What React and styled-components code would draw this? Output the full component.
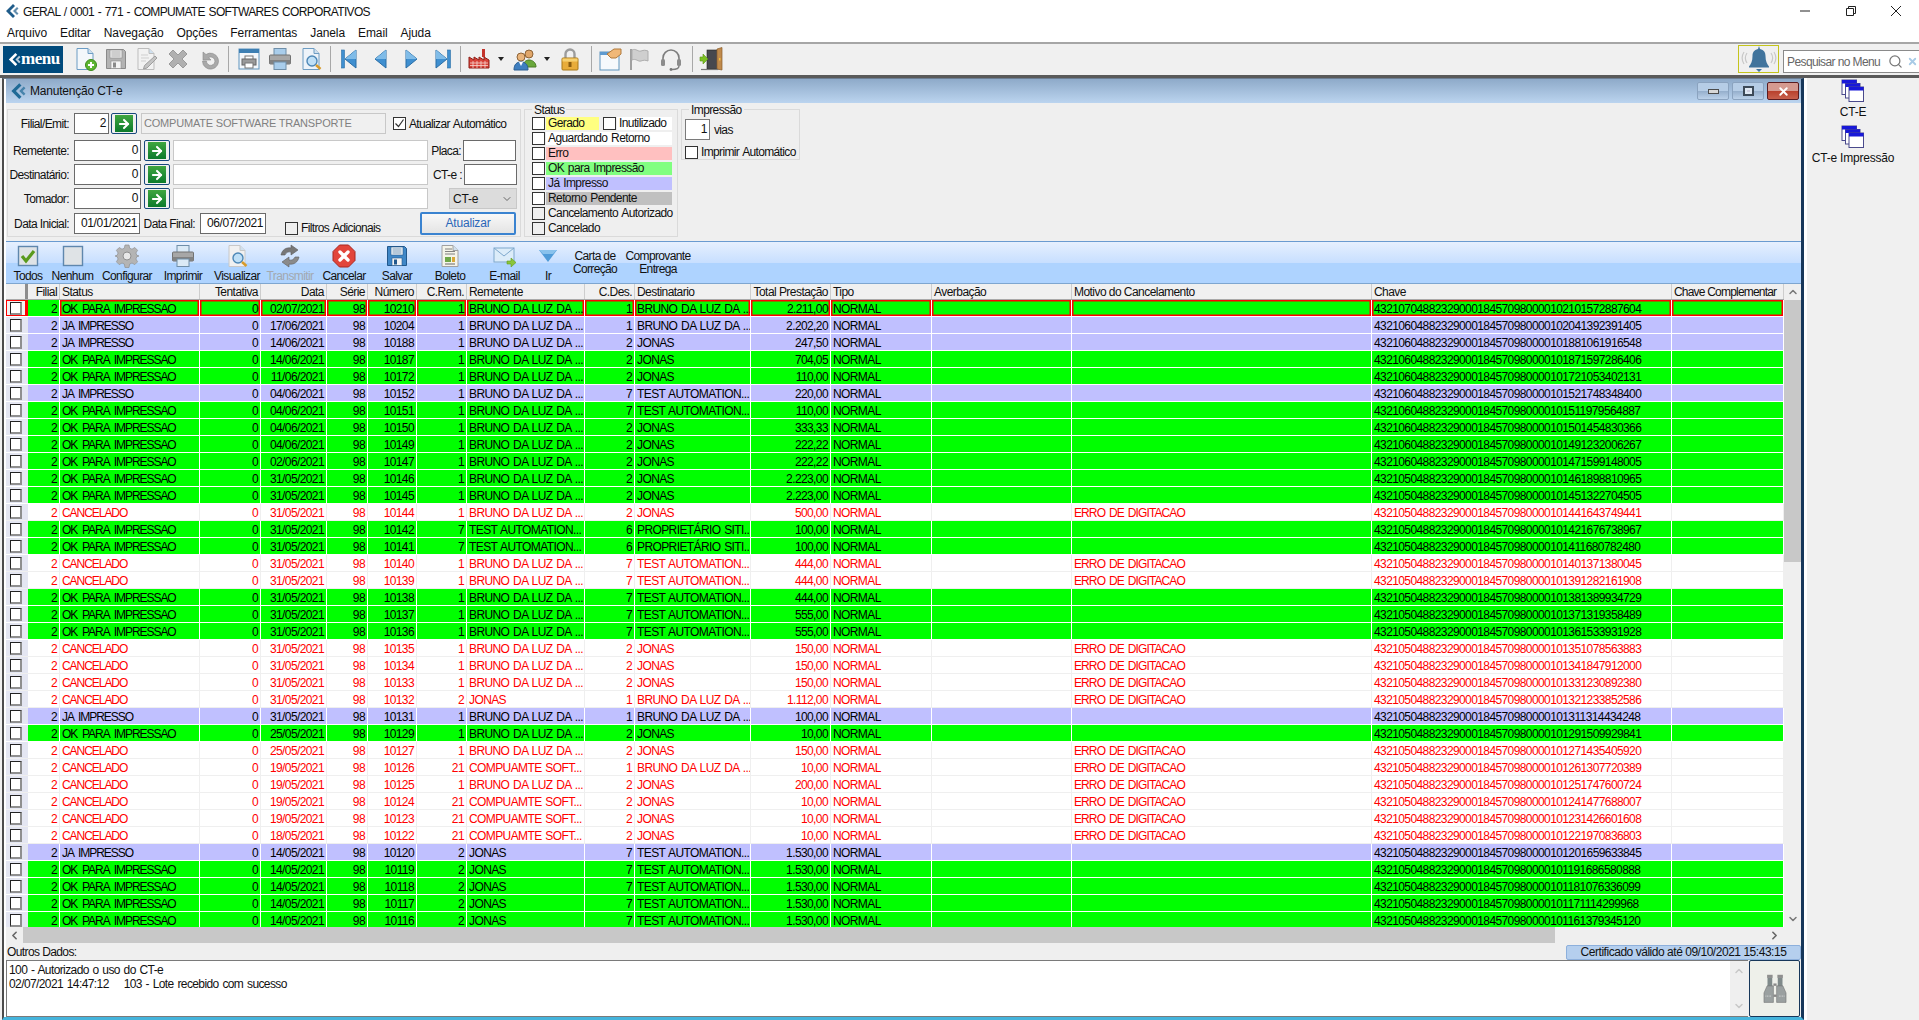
import React from 'react'
import styled, { createGlobalStyle } from 'styled-components'
import { ArrowRight, ChevronDown, ChevronUp, ChevronLeft, ChevronRight, Search, X } from 'lucide-react'

const GlobalStyle = createGlobalStyle`
  html, body {
    margin: 0;
    padding: 0;
    overflow: hidden;
    background: #f0f0f0;
  }
  * { box-sizing: border-box; }
  body {
    font-family: "Liberation Sans", Arial, sans-serif;
    font-size: 12px;
    color: #111;
  }
`

const COLUMNS = [
  { key: 'filial', title: 'Filial', width: 32, right: true },
  { key: 'status', title: 'Status', width: 140, spacing: -1.05, words: 2.5 },
  { key: 'tentativa', title: 'Tentativa', width: 61, right: true },
  { key: 'data', title: 'Data', width: 66, right: true },
  { key: 'serie', title: 'Série', width: 41, right: true },
  { key: 'numero', title: 'Número', width: 49, right: true },
  { key: 'crem', title: 'C.Rem.', width: 50, right: true },
  { key: 'rem', title: 'Remetente', width: 118, words: 1 },
  { key: 'cdes', title: 'C.Des.', width: 50, right: true },
  { key: 'dest', title: 'Destinatario', width: 116, words: 1 },
  { key: 'total', title: 'Total Prestação', width: 80, right: true },
  { key: 'tipo', title: 'Tipo', width: 101 },
  { key: 'averb', title: 'Averbação', width: 140 },
  { key: 'motivo', title: 'Motivo do Cancelamento', width: 300, spacing: -0.9, words: 1.5 },
  { key: 'chave', title: 'Chave', width: 300 },
  { key: 'comp', title: 'Chave Complementar', width: 112, headSpacing: -0.8 }
]

const GRID_TEMPLATE = `22px ${COLUMNS.map(c => `${c.width}px`).join(' ')}`

const PARTIES = {
  B: { code: 1, name: 'BRUNO DA LUZ DA ...' },
  J: { code: 2, name: 'JONAS' },
  T: { code: 7, name: 'TEST AUTOMATION...' },
  C: { code: 21, name: 'COMPUAMTE SOFT...' },
  P: { code: 6, name: 'PROPRIETÁRIO SITI...' }
}

const STATUS = {
  ok: 'OK PARA IMPRESSAO',
  ja: 'JA IMPRESSO',
  ca: 'CANCELADO'
}

// status, data, numero, remetente, destinatario, total, fim da chave
const RAW_ROWS = [
  ['ok', '02/07/2021', '10210', 'B', 'B', '2.211,00', '1572887604'],
  ['ja', '17/06/2021', '10204', 'B', 'B', '2.202,20', '1392391405'],
  ['ja', '14/06/2021', '10188', 'B', 'J', '247,50', '1061916548'],
  ['ok', '14/06/2021', '10187', 'B', 'J', '704,05', '1597286406'],
  ['ok', '11/06/2021', '10172', 'B', 'J', '110,00', '1053402131'],
  ['ja', '04/06/2021', '10152', 'B', 'T', '220,00', '1748348400'],
  ['ok', '04/06/2021', '10151', 'B', 'T', '110,00', '1979564887'],
  ['ok', '04/06/2021', '10150', 'B', 'J', '333,33', '1454830366'],
  ['ok', '04/06/2021', '10149', 'B', 'J', '222,22', '1232006267'],
  ['ok', '02/06/2021', '10147', 'B', 'J', '222,22', '1599148005'],
  ['ok', '31/05/2021', '10146', 'B', 'J', '2.223,00', '1898810965'],
  ['ok', '31/05/2021', '10145', 'B', 'J', '2.223,00', '1322704505'],
  ['ca', '31/05/2021', '10144', 'B', 'J', '500,00', '1643749441'],
  ['ok', '31/05/2021', '10142', 'T', 'P', '100,00', '1676738967'],
  ['ok', '31/05/2021', '10141', 'T', 'P', '100,00', '1680782480'],
  ['ca', '31/05/2021', '10140', 'B', 'T', '444,00', '1371380045'],
  ['ca', '31/05/2021', '10139', 'B', 'T', '444,00', '1282161908'],
  ['ok', '31/05/2021', '10138', 'B', 'T', '444,00', '1389934729'],
  ['ok', '31/05/2021', '10137', 'B', 'T', '555,00', '1319358489'],
  ['ok', '31/05/2021', '10136', 'B', 'T', '555,00', '1533931928'],
  ['ca', '31/05/2021', '10135', 'B', 'J', '150,00', '1078563883'],
  ['ca', '31/05/2021', '10134', 'B', 'J', '150,00', '1847912000'],
  ['ca', '31/05/2021', '10133', 'B', 'J', '150,00', '1230892380'],
  ['ca', '31/05/2021', '10132', 'J', 'B', '1.112,00', '1233852586'],
  ['ja', '31/05/2021', '10131', 'B', 'B', '100,00', '1314434248'],
  ['ok', '25/05/2021', '10129', 'B', 'J', '10,00', '1509929841'],
  ['ca', '25/05/2021', '10127', 'B', 'J', '150,00', '1435405920'],
  ['ca', '19/05/2021', '10126', 'C', 'B', '10,00', '1307720389'],
  ['ca', '19/05/2021', '10125', 'B', 'J', '200,00', '1747600724'],
  ['ca', '19/05/2021', '10124', 'C', 'J', '10,00', '1477688007'],
  ['ca', '19/05/2021', '10123', 'C', 'J', '10,00', '1426601608'],
  ['ca', '18/05/2021', '10122', 'C', 'J', '10,00', '1970836803'],
  ['ja', '14/05/2021', '10120', 'J', 'T', '1.530,00', '1659633845'],
  ['ok', '14/05/2021', '10119', 'J', 'T', '1.530,00', '1686580888'],
  ['ok', '14/05/2021', '10118', 'J', 'T', '1.530,00', '1076336099'],
  ['ok', '14/05/2021', '10117', 'J', 'T', '1.530,00', '1114299968'],
  ['ok', '14/05/2021', '10116', 'J', 'T', '1.530,00', '1379345120']
]

const ROWS = RAW_ROWS.map(([kind, data, numero, rem, dest, total, tail]) => ({
  kind,
  filial: '2',
  status: STATUS[kind],
  tentativa: '0',
  data,
  serie: '98',
  numero,
  crem: PARTIES[rem].code,
  rem: PARTIES[rem].name,
  cdes: PARTIES[dest].code,
  dest: PARTIES[dest].name,
  total,
  tipo: 'NORMAL',
  averb: '',
  motivo: kind === 'ca' ? 'ERRO DE DIGITACAO' : '',
  chave: `4321${data.slice(3, 5)}04882329000184570980000${numero}${tail}`,
  comp: ''
}))

const ROW_COLORS = {
  ok: { bg: '#00ff00', fg: '#000', line: '#ffffff' },
  ja: { bg: '#c0c0ff', fg: '#000', line: '#ffffff' },
  ca: { bg: '#ffffff', fg: '#ff0000', line: '#efefef' }
}

/* ---------- estrutura geral ---------- */

const Page = styled.div`
  width: 1919px;
  height: 1020px;
  display: flex;
  flex-direction: column;
  overflow: hidden;
`

const TitleBar = styled.div`
  height: 21px;
  background: #fff;
  display: flex;
  align-items: center;
  padding-left: 3px;
`

const TitleText = styled.span`
  margin-left: 4px;
  padding-top: 2px;
  letter-spacing: -0.65px;
  word-spacing: 1px;
  white-space: nowrap;
`

const WindowControls = styled.div`
  margin-left: auto;
  display: flex;
  height: 21px;
`

const WindowControl = styled.div`
  width: 45.5px;
  display: flex;
  align-items: center;
  justify-content: center;
`

const MenuBar = styled.div`
  height: 21px;
  background: #fff;
  display: flex;
  align-items: center;
  gap: 13px;
  padding: 2px 0 0 7px;
`

const MenuItem = styled.span`
  letter-spacing: -0.1px;
`

const MainToolbar = styled.div`
  height: 36px;
  flex: none;
  display: flex;
  align-items: center;
  background: #f0f0f0;
  border-top: 2px solid #a6a6a6;
  border-bottom: 3px solid #5a5a5a;
  padding: 0 0 1px 3px;
`

const MenuLogo = styled.div`
  width: 60px;
  height: 27px;
  flex: none;
  background: #004a7c;
  color: #fff;
  display: flex;
  align-items: center;
  padding-left: 3px;
  margin-right: 6px;
  font-family: "Liberation Serif", serif;
  font-weight: bold;
  font-size: 17px;
  letter-spacing: -0.5px;
`

const ToolIcon = styled.div`
  width: ${p => p.$w || 31}px;
  height: 28px;
  flex: none;
  display: flex;
  align-items: center;
  justify-content: center;
`

const ToolSep = styled.div`
  width: 1px;
  height: 26px;
  flex: none;
  margin: 0 ${p => p.$gap || 4}px;
  background: #a8a8a8;
`

const RightTools = styled.div`
  margin-left: auto;
  display: flex;
  align-items: flex-end;
  gap: 4px;
  height: 28px;
`

const BellBox = styled.div`
  width: 41px;
  height: 28px;
  border: 1px solid #c4c41c;
  display: flex;
  align-items: center;
  justify-content: center;
`

const MenuSearch = styled.div`
  width: 136px;
  height: 23px;
  border: 1px solid #8a8a8a;
  border-right: none;
  background: #fff;
  display: flex;
  align-items: center;
  padding-left: 3px;
  color: #666;
  letter-spacing: -0.6px;
  white-space: nowrap;
`

const SearchHint = styled.span`
  width: 101px;
`

const SearchGlyph = styled.span`
  display: flex;
  margin-left: ${p => p.$ml || 0}px;
  color: ${p => p.$color};
`

const Body = styled.div`
  flex: 1;
  min-height: 0;
  display: flex;
  padding-left: 2px;
`

const ChildWindow = styled.div`
  width: 1802px;
  flex: none;
  display: flex;
  flex-direction: column;
  background: #fff;
  border-left: 2px solid #4c4c4c;
  border-right: 3px solid #17375a;
  border-bottom: 3px solid #45b4dc;
  border-top: 1px solid #6d7f94;
  padding-left: 2px;
`

const SidePanel = styled.div`
  flex: 1;
  border-left: 3px solid #fff;
  background: #f0f0f0;
  display: flex;
  flex-direction: column;
  align-items: center;
  padding-top: 1px;
  padding-right: 20px;
`

const SideItem = styled.div`
  height: 46px;
  display: flex;
  flex-direction: column;
  align-items: center;
  gap: 2px;
  letter-spacing: -0.2px;
  white-space: nowrap;
`

const ChildTitle = styled.div`
  height: 24px;
  flex: none;
  background: linear-gradient(#8eaac9, #bbd4ef);
  display: flex;
  align-items: center;
  padding-left: 2px;
`

const ChildTitleText = styled.span`
  margin-left: 4px;
  letter-spacing: -0.2px;
`

const ChildControls = styled.div`
  margin-left: auto;
  display: flex;
  gap: 3px;
  padding-right: 2px;
`

const ChildControl = styled.div`
  width: 32px;
  height: 18px;
  border-radius: 2px;
  display: flex;
  align-items: center;
  justify-content: center;
  border: 1px solid ${p => (p.$close ? '#5a1c20' : '#8ba3bf')};
  background: ${p => (p.$close
    ? 'linear-gradient(#d59a90 0 50%, #b8402c 50%, #c8604c)'
    : 'linear-gradient(#b6cde6 0 50%, #94aecb 50%, #bcd2ea)')};
  color: #fff;
`

const MinGlyph = styled.span`
  width: 11px;
  height: 5px;
  background: #d8d8d8;
  border: 1px solid #4c4c4c;
`

const MaxGlyph = styled.span`
  width: 11px;
  height: 10px;
  border: 2px solid #3d4a58;
  background: #ccd;
  box-shadow: inset 0 0 0 2px #dfe8f2;
`

/* ---------- filtros ---------- */

const FormArea = styled.div`
  height: 138px;
  flex: none;
  background: #efefef;
  display: flex;
  align-items: flex-start;
  gap: 3px;
  padding: 6px 0 0 1px;
`

const GroupBox = styled.div`
  position: relative;
  flex: none;
  width: ${p => p.$w}px;
  height: ${p => p.$h}px;
  border: 1px solid #dadada;
`

const GroupTitle = styled.span`
  position: absolute;
  top: -6px;
  left: 7px;
  padding: 0 2px;
  background: #efefef;
  line-height: 12px;
  letter-spacing: -0.6px;
`

const FilterRows = styled.div`
  display: flex;
  flex-direction: column;
  padding-top: 3px;
  gap: 3px;
`

const FilterRow = styled.div`
  display: flex;
  align-items: center;
  height: ${p => p.$h || 21}px;
  margin-bottom: ${p => p.$mb || 0}px;
`

const FieldLabel = styled.label`
  width: ${p => p.$w || 61}px;
  margin-left: ${p => p.$ml || 0}px;
  flex: none;
  text-align: right;
  letter-spacing: -0.6px;
  white-space: nowrap;
`

const Field = styled.div`
  width: ${p => p.$w}px;
  height: 21px;
  flex: none;
  margin-left: ${p => p.$ml || 0}px;
  background: #fff;
  border: 1px solid ${p => (p.$dark ? '#6a6a6a' : '#c8c8c8')};
  text-align: ${p => (p.$left ? 'left' : 'right')};
  padding: 0 2px;
  line-height: 18px;
  letter-spacing: -0.4px;
  white-space: nowrap;
  overflow: hidden;
`

const ReadOnlyField = styled(Field)`
  background: #f0f0f0;
  color: #808080;
  text-align: left;
  font-size: 11px;
  letter-spacing: -0.2px;
`

const ArrowButton = styled.div`
  width: 26px;
  height: 21px;
  flex: none;
  margin-left: ${p => p.$ml || 0}px;
  border: 1px solid #17487c;
  border-radius: 2px;
  background: #f0f0f0;
  display: flex;
  align-items: center;
  justify-content: center;
`

const ArrowFace = styled.span`
  width: 18px;
  height: 17px;
  background: linear-gradient(#3fa63f, #0c7a2c);
  display: flex;
  align-items: center;
  justify-content: center;
  color: #fff;
`

const Check = styled.span`
  width: 13px;
  height: 13px;
  flex: none;
  margin-left: ${p => p.$ml || 0}px;
  border: 1px solid #333;
  background: ${p => (p.$bare ? 'transparent' : '#fff')};
  display: inline-flex;
  align-items: center;
  justify-content: center;
`

const CheckLabel = styled.span`
  margin-left: ${p => p.$ml ?? 3}px;
  letter-spacing: -0.65px;
  word-spacing: 1px;
  white-space: nowrap;
`

const FiltrosCheck = styled.div`
  display: flex;
  align-items: center;
  align-self: flex-end;
  margin-left: 19px;
`

const Combo = styled.div`
  width: 68px;
  height: 21px;
  flex: none;
  margin-left: 21px;
  background: #dcdcdc;
  border: 1px solid #c8c8c8;
  display: flex;
  align-items: center;
  justify-content: space-between;
  padding: 0 3px;
  letter-spacing: -0.2px;
`

const RefreshButton = styled.div`
  width: 96px;
  height: 23px;
  flex: none;
  margin-left: auto;
  margin-right: 4px;
  border: 2px solid #3a83d0;
  border-radius: 2px;
  background: linear-gradient(#f8f8f8, #e4e4e4);
  color: #2a66b8;
  text-align: center;
  line-height: 19px;
  letter-spacing: -0.2px;
`

const StatusRows = styled.div`
  display: flex;
  flex-direction: column;
  padding: 6px 5px 0 7px;
`

const StatusRow = styled.div`
  height: 15px;
  display: flex;
  align-items: center;
`

const StatusTag = styled.span`
  flex: ${p => (p.$w ? 'none' : 1)};
  width: ${p => (p.$w ? `${p.$w}px` : 'auto')};
  height: 13px;
  margin-left: ${p => p.$ml || 1}px;
  padding-left: 2px;
  background: ${p => p.$bg || 'transparent'};
  line-height: 13px;
  letter-spacing: -0.6px;
  word-spacing: 1px;
  white-space: nowrap;
`

const PrintRows = styled.div`
  padding: 9px 0 0 3px;
  display: flex;
  flex-direction: column;
  gap: 5px;
`

const PrintRow = styled.div`
  display: flex;
  align-items: center;
`

const ViasField = styled(Field)`
  border-color: #7a7a7a;
`

/* ---------- barra de ações ---------- */

const ActionBar = styled.div`
  height: 43px;
  flex: none;
  display: flex;
  border-top: 1px solid #6a9bd0;
  border-bottom: 1px solid #7ea6d0;
  background: linear-gradient(#e6f0fe 0, #c8dfff 50%, #aed3ff 50%, #aed3ff 100%);
`

const ActionButton = styled.div`
  width: ${p => p.$w}px;
  flex: none;
  display: flex;
  flex-direction: column;
  align-items: center;
  justify-content: flex-end;
  color: ${p => (p.$disabled ? '#a2a8b0' : '#111')};
  letter-spacing: -0.6px;
  white-space: nowrap;
`

const ActionIcon = styled.div`
  height: 24px;
  display: flex;
  align-items: center;
  justify-content: center;
  margin-bottom: 1px;
`

const ActionText = styled.div`
  width: ${p => p.$w}px;
  flex: none;
  align-self: center;
  text-align: center;
  line-height: 13px;
  letter-spacing: -0.65px;
`

/* ---------- grade ---------- */

const GridArea = styled.div`
  flex: none;
  display: flex;
  height: 643px;
  background: #fff;
`

const GridColumn = styled.div`
  width: 1778px;
  flex: none;
  overflow: hidden;
`

const HeaderRow = styled.div`
  display: grid;
  grid-template-columns: ${GRID_TEMPLATE};
  height: 16px;
  background: #f0f0f0;
  border-bottom: 1px solid #a9a9a9;
`

const HeaderCell = styled.div`
  text-align: ${p => (p.$right ? 'right' : 'left')};
  padding: 1px 2px 0;
  border-right: 1px solid #cdcdcd;
  line-height: 15px;
  letter-spacing: ${p => p.$spacing || -0.55}px;
  overflow: hidden;
  white-space: nowrap;
`

const HeaderCorner = styled.div`
  border-right: 3px solid #8d8d8d;
`

const DataRow = styled.div`
  display: grid;
  grid-template-columns: ${GRID_TEMPLATE};
  height: 17px;
  background: ${p => ROW_COLORS[p.$kind].bg};
  color: ${p => ROW_COLORS[p.$kind].fg};
  border-bottom: 1px solid ${p => ROW_COLORS[p.$kind].line};
`

const DataCell = styled.div`
  text-align: ${p => (p.$right ? 'right' : 'left')};
  padding: 2px ${p => (p.$right ? 2 : 1)}px 0 2px;
  border-right: 1px solid ${p => ROW_COLORS[p.$kind].line};
  line-height: 14px;
  letter-spacing: ${p => p.$spacing || -0.6}px;
  word-spacing: ${p => p.$words || 0}px;
  overflow: hidden;
  white-space: nowrap;
  ${p => p.$selected && `
    box-shadow: inset 0 0 0 1.5px #ff0000;
  `}
`

const RowIndicator = styled.div`
  background: #e4e6f2;
  display: flex;
  align-items: center;
  padding-left: 4px;
  ${p => p.$selected && `
    background: #f2f2f2;
    border: 1px solid #ff0000;
    border-right: 3px solid #ff0000;
    padding-left: 3px;
  `}
`

const RowCheck = styled.span`
  width: 12px;
  height: 13px;
  background: #fff;
  border-top: 1px solid #222;
  border-left: 1px solid #222;
  border-right: 2px solid #8f8f8f;
  border-bottom: 2px solid #8f8f8f;
`

const VScroll = styled.div`
  width: 17px;
  flex: none;
  background: #efefef;
  display: flex;
  flex-direction: column;
  align-items: center;
  color: #777;
`

const VArrow = styled.div`
  height: 16px;
  flex: none;
  display: flex;
  align-items: center;
  justify-content: center;
`

const VThumb = styled.div`
  width: 100%;
  height: 262px;
  flex: none;
  background: #c8c8c8;
`

const VTrack = styled.div`
  flex: 1;
`

const HScroll = styled.div`
  height: 16px;
  flex: none;
  display: flex;
  align-items: center;
  background: #efefef;
  color: #666;
`

const HArrow = styled.div`
  width: ${p => p.$w || 17}px;
  display: flex;
  justify-content: center;
  flex: none;
  margin-left: ${p => p.$ml || 0}px;
`

const HThumb = styled.div`
  width: 1532px;
  height: 16px;
  flex: none;
  background: #c8c8c8;
`

/* ---------- rodapé ---------- */

const InfoRow = styled.div`
  height: 17px;
  flex: none;
  display: flex;
  align-items: flex-end;
  background: #efefef;
  padding-left: 1px;
  letter-spacing: -0.6px;
`

const InfoLabel = styled.span`
  line-height: 15px;
`

const CertBadge = styled.div`
  margin-left: auto;
  width: 235px;
  height: 15px;
  background: #b5cfee;
  border: 1px solid #8db0dc;
  border-radius: 2px;
  text-align: center;
  line-height: 13px;
  letter-spacing: -0.47px;
`

const MemoRow = styled.div`
  flex: 1;
  min-height: 0;
  display: flex;
  background: #efefef;
`

const Memo = styled.div`
  flex: 1;
  display: flex;
  background: #fff;
  border: 1px solid #7a7a7a;
  border-right: none;
`

const MemoText = styled.div`
  flex: 1;
  padding: 3px 2px;
  line-height: 13.5px;
  letter-spacing: -0.6px;
  word-spacing: 1px;
  white-space: pre;
`

const MemoScroll = styled.div`
  width: 18px;
  background: #efefef;
  color: #c8c8c8;
  display: flex;
  flex-direction: column;
  align-items: center;
  justify-content: space-between;
  padding: 4px 0;
`

const SearchButton = styled.div`
  width: 51px;
  flex: none;
  margin: 0 1px 0 1px;
  border: 1px solid #17375a;
  border-radius: 2px;
  background: #eef0ea;
  display: flex;
  align-items: center;
  justify-content: center;
`

/* ---------- ícones ---------- */

const Svg = ({ w = 24, h = 24, box = '0 0 24 24', children }) => (
  <svg width={w} height={h} viewBox={box}>{children}</svg>
)

const BrandChevrons = ({ color = '#2a6f9e', size = 16 }) => (
  <Svg w={size} h={size} box='0 0 16 16'>
    <path d='M10 1 L3 8 L10 15 L12 13 L7 8 L12 3 Z' fill={color} />
    <path d='M14 4 L10 8 L14 12 L15.5 10.5 L13 8 L15.5 5.5 Z' fill={color} opacity='.7' />
  </Svg>
)

const Page2 = ({ fill = '#f3f7fb', stroke = '#6c9cc4', children }) => (
  <Svg>
    <path d='M4 1.5h11l5 5v16H4z' fill={fill} stroke={stroke} />
    <path d='M15 1.5v5h5' fill='#cfe0ef' stroke={stroke} />
    {children}
  </Svg>
)

const NewDocIcon = () => (
  <Page2>
    <circle cx='18' cy='18' r='5.5' fill='#5cb531' stroke='#3c8a1c' />
    <path d='M18 15v6M15 18h6' stroke='#fff' strokeWidth='2' />
  </Page2>
)

const FloppyIcon = ({ body = '#b3b3b3', label = '#ececec', dark = '#8a8a8a' }) => (
  <Svg>
    <path d='M2.5 2.5h17l2 2v17h-19z' fill={body} stroke={dark} />
    <rect x='6' y='3' width='12' height='8' fill={label} stroke={dark} strokeWidth='.6' />
    <path d='M7.5 5h9M7.5 7h9M7.5 9h9' stroke={dark} strokeWidth='.6' />
    <rect x='7' y='14' width='10' height='7.5' fill='#f4f4f4' stroke={dark} strokeWidth='.6' />
    <rect x='9' y='15.5' width='3' height='5' fill={dark} />
  </Svg>
)

const EditDocIcon = () => (
  <Page2 fill='#f2f2f2' stroke='#bdbdbd'>
    <path d='M21 9l2 2-10 10-3.5 1 1-3.5z' fill='#c4c4c4' stroke='#9e9e9e' />
    <path d='M7 8h7M7 11h8M7 14h5' stroke='#cfcfcf' />
  </Page2>
)

const GrayXIcon = () => (
  <Svg>
    <path d='M3 7l4-4 5 5 5-5 4 4-5 5 5 5-4 4-5-5-5 5-4-4 5-5z' fill='#b0b0b0' stroke='#9a9a9a' />
  </Svg>
)

const UndoIcon = () => (
  <Svg>
    <path d='M8 6.5a8 8 0 1 1-3.5 6.5h4a4.2 4.2 0 1 0 2-3.4L13 12H5V4z' fill='#a9a9a9' stroke='#8c8c8c' strokeWidth='.6' transform='translate(1 1)' />
  </Svg>
)

const PrintWindowIcon = () => (
  <Svg>
    <rect x='2' y='2' width='20' height='20' fill='#f3f7fb' stroke='#5f94bd' />
    <rect x='2' y='2' width='20' height='4' fill='#3d7fb3' />
    <rect x='8' y='9' width='8' height='4' fill='#fff' stroke='#777' />
    <rect x='5' y='12' width='14' height='6' fill='#9a9a9a' stroke='#666' />
    <rect x='8' y='16' width='8' height='5' fill='#fff' stroke='#777' />
  </Svg>
)

const PrinterIcon = ({ tint = '#a9cdeb' }) => (
  <Svg>
    <rect x='6' y='1.5' width='12' height='7' fill={tint} stroke='#6f8ea8' />
    <rect x='1.5' y='8' width='21' height='9' rx='1' fill='#a7a7a7' stroke='#727272' />
    <rect x='1.5' y='13' width='21' height='4' fill='#828282' />
    <rect x='6' y='15' width='12' height='7.5' fill={tint} stroke='#6f8ea8' />
  </Svg>
)

const PageZoomIcon = ({ fill = '#edf3f9', stroke = '#6d9cc2' }) => (
  <Page2 fill={fill} stroke={stroke}>
    <circle cx='13' cy='14' r='5' fill='#bfe0f7' stroke='#4d87b6' strokeWidth='1.4' />
    <path d='M17 18l4.5 4' stroke='#d79a2a' strokeWidth='2.4' />
  </Page2>
)

const NavIcon = ({ dir, bar }) => (
  <Svg>
    <g transform={dir === 'left' ? 'translate(24 0) scale(-1 1)' : undefined}>
      <path d='M7 3l11 9-11 9z' fill='#3f8fd0' stroke='#2a6ea6' />
      <path d='M7 3l11 9H7z' fill='#80bce8' />
      {bar && <rect x='18.5' y='3' width='3' height='18' fill='#3f8fd0' stroke='#2a6ea6' strokeWidth='.6' />}
    </g>
  </Svg>
)

const Caret = styled.span`
  width: 0;
  height: 0;
  border-left: 3px solid transparent;
  border-right: 3px solid transparent;
  border-top: 4px solid #222;
`

const FactoryIcon = () => (
  <Svg>
    <rect x='15' y='2' width='3' height='8' fill='#c4342c' />
    <path d='M2 10l5 3v-3l5 3v-3l5 3v-3l5 3v8H2z' fill='#d8433a' stroke='#8e2018' />
    <path d='M3 16h18M3 18.5h18M6 14v7M10 14v7M14 14v7M18 14v7' stroke='#f6d8d0' strokeWidth='.8' />
  </Svg>
)

const UsersIcon = () => (
  <Svg>
    <circle cx='16' cy='7' r='4' fill='#e0a66a' stroke='#8c6236' />
    <path d='M10 20c0-5 3-7 6-7s7 2 7 7z' fill='#6aa83c' stroke='#4a7d26' />
    <circle cx='8' cy='10' r='4' fill='#eab57c' stroke='#8c6236' />
    <path d='M1 23c0-6 3-8 7-8s7 2 7 8z' fill='#3f7fc0' stroke='#2a5f94' />
    <path d='M6 15l2 4 2-4' fill='#fff' />
  </Svg>
)

const LockIcon = () => (
  <Svg>
    <path d='M7.5 11V7a4.5 4.5 0 0 1 9 0v4' fill='none' stroke='#9c9c9c' strokeWidth='2.4' />
    <rect x='4' y='11' width='16' height='12' rx='1' fill='#e8ac3a' stroke='#a87818' />
    <rect x='4.5' y='11.5' width='15' height='3' fill='#f6d070' />
    <rect x='10.5' y='15' width='3' height='5' fill='#8a5c10' />
  </Svg>
)

const NoteHandIcon = () => (
  <Svg>
    <rect x='2' y='5' width='19' height='18' fill='#f6f9fc' stroke='#5f94bd' />
    <rect x='2' y='5' width='19' height='3' fill='#5f9bd0' />
    <path d='M9 7l7-5 7 0 0 5-5 4-5 0z' fill='#f0b878' stroke='#b07a3c' />
  </Svg>
)

const FlagIcon = () => (
  <Svg>
    <path d='M4 2v21' stroke='#a0a0a0' strokeWidth='2' />
    <path d='M5 3c4-2 6 2 9 1s4-1 7 0v10c-3-1-4-1-7 0s-5-3-9-1z' fill='#cfcfcf' stroke='#adadad' />
  </Svg>
)

const HeadsetIcon = () => (
  <Svg>
    <path d='M4 14V11a8 8 0 0 1 16 0v3' fill='none' stroke='#7d7d7d' strokeWidth='1.6' />
    <rect x='2' y='12' width='4' height='7' rx='1.5' fill='#8c8c8c' />
    <rect x='18' y='12' width='4' height='7' rx='1.5' fill='#8c8c8c' />
    <path d='M20 19c0 3-3 3.5-7 3.5' fill='none' stroke='#7d7d7d' strokeWidth='1.4' />
    <circle cx='12' cy='22.5' r='1.4' fill='#777' />
  </Svg>
)

const DoorIcon = () => (
  <Svg>
    <rect x='8' y='3' width='12' height='19' fill='#47484e' stroke='#222' strokeWidth='.6' />
    <path d='M18 2l5-1.5V23l-5-1z' fill='#c08a4c' stroke='#8a5c28' strokeWidth='.7' />
    <rect x='20' y='11' width='1.5' height='2.5' fill='#f2c040' />
    <path d='M1 10h3V7l5 5-5 5v-3H1z' fill='#7cc024' stroke='#5a9414' strokeWidth='.6' />
    <path d='M2 22.5h17' stroke='#777' strokeWidth='1.2' />
  </Svg>
)

const BellIcon = () => (
  <Svg w={38} h={26} box='0 0 38 26'>
    <path d='M7 7c-2 3-2 7 0 10M4 6c-2.500 4-2.500 8 0 12M31 7c2 3 2 7 0 10M34 6c2.500 4 2.500 8 0 12' fill='none' stroke='#c8c8c8' strokeWidth='1.2' />
    <path d='M19 0l1 3c4 .8 5.500 3.500 5.500 7 0 5 1.500 8 3.500 10.500v1H9v-1c2-2.500 3.500-5.500 3.500-10.500 0-3.500 1.500-6.200 5.500-7z' fill='#41749c' />
    <path d='M16 23h6l-3 3z' fill='#41749c' />
  </Svg>
)

const WindowsIcon = () => (
  <Svg w={24} h={24}>
    {[[1, 1], [4.500, 4.500], [8, 8]].map(([x, y]) => (
      <g key={x}>
        <rect x={x} y={y} width='14.500' height='14.500' fill='#fff' stroke='#4a4a8c' />
        <rect x={x} y={y} width='14.500' height='3.500' fill='#1818d8' />
      </g>
    ))}
  </Svg>
)

const CheckedBoxIcon = ({ checked }) => (
  <Svg>
    <rect x='2.500' y='2.500' width='19' height='19' fill='#dfe3e6' stroke='#5f87ad' strokeWidth='1.400' />
    {checked && <path d='M6 12l4 5 8-10' fill='none' stroke='#5a9a1c' strokeWidth='3.200' />}
  </Svg>
)

const GearIcon = () => (
  <Svg>
    <path d='M10 1h4l.7 3.200 2.300 1 2.800-1.700 2.800 2.800L20.900 9l1 2.300L24 12v0l-2.100.7-1 2.300 1.700 2.800-2.800 2.800L17 19l-2.300 1-.7 3.500h-4L9.300 20 7 19l-2.800 1.600-2.800-2.800L3.100 15l-1-2.300L0 12l2.100-.7 1-2.300L1.400 6.300l2.800-2.800L7 5.200l2.300-1z' fill='#b4b4b4' stroke='#8f8f8f' strokeWidth='.7' />
    <circle cx='12' cy='12' r='4' fill='#e8e8e8' stroke='#8f8f8f' />
  </Svg>
)

const SyncIcon = () => (
  <Svg>
    <path d='M3 11c1-5 5-8 10-7V1l7 5-7 5V8c-3-.6-5 .6-6 3z' fill='#777' stroke='#5c5c5c' strokeWidth='.6' />
    <path d='M21 13c-1 5-5 8-10 7v3l-7-5 7-5v3c3 .6 5-.6 6-3z' fill='#8a8a8a' stroke='#5c5c5c' strokeWidth='.6' />
  </Svg>
)

const CancelIcon = () => (
  <Svg>
    <path d='M7.500 1h9L23 7.500v9L16.500 23h-9L1 16.500v-9z' fill='#e2453b' stroke='#a82820' />
    <path d='M8 8l8 8M16 8l-8 8' stroke='#fff' strokeWidth='3.400' strokeLinecap='round' />
  </Svg>
)

const BoletoIcon = () => (
  <Page2 fill='#f4f4ea' stroke='#a0a0a0'>
    <path d='M7 5h7M7 7.500h10M7 10h10' stroke='#666' strokeWidth='.8' />
    <rect x='7' y='13' width='6' height='5' fill='#6fa84a' />
    <rect x='14' y='13' width='3' height='5' fill='#d8a83a' />
    <path d='M7 20h10' stroke='#666' />
  </Page2>
)

const MailIcon = () => (
  <Svg>
    <rect x='1' y='4' width='20' height='14' fill='#dcecf9' stroke='#7ea8cc' />
    <path d='M1 4l10 8 10-8' fill='none' stroke='#7ea8cc' />
    <path d='M14 17h4v-3l5 4.500-5 4.500v-3h-4z' fill='#8bc53a' stroke='#5f9a1c' strokeWidth='.6' />
  </Svg>
)

const DownTriangleIcon = () => (
  <Svg w={20} h={14} box='0 0 20 14'>
    <path d='M1 1h18l-9 12z' fill='#4f9bd8' />
    <path d='M1 1h18l-4 4H5z' fill='#89c2ec' />
  </Svg>
)

const BinocularsIcon = () => (
  <Svg w={26} h={30} box='0 0 30 38'>
    <rect x='5' y='1' width='7' height='4' fill='#8f8f8f' />
    <rect x='18' y='1' width='7' height='4' fill='#8f8f8f' />
    <rect x='5.500' y='5' width='6' height='11' fill='#7f8a8a' />
    <rect x='18.500' y='5' width='6' height='11' fill='#7f8a8a' />
    <path d='M5 15h8v21H1V24z' fill='#9aa0a0' stroke='#666' strokeWidth='.6' />
    <path d='M25 15h-8v21h12V24z' fill='#9aa0a0' stroke='#666' strokeWidth='.6' />
    <rect x='13' y='12' width='4' height='3' fill='#888' />
    <rect x='13' y='26' width='4' height='3' fill='#888' />
    <path d='M3 28h7M20 28h7' stroke='#eee' strokeDasharray='1 1' />
  </Svg>
)

/* ---------- partes da tela ---------- */

const ACTIONS = [
  { label: 'Todos', w: 44, icon: <CheckedBoxIcon checked /> },
  { label: 'Nenhum', w: 45, icon: <CheckedBoxIcon /> },
  { label: 'Configurar', w: 64, icon: <GearIcon /> },
  { label: 'Imprimir', w: 48, icon: <PrinterIcon tint='#dbeaf6' /> },
  { label: 'Visualizar', w: 60, icon: <PageZoomIcon fill='#f1f1f1' stroke='#c8c8c8' /> },
  { label: 'Transmitir', w: 46, icon: <SyncIcon />, disabled: true },
  { label: 'Cancelar', w: 62, icon: <CancelIcon /> },
  { label: 'Salvar', w: 44, icon: <FloppyIcon body='#3f87c7' label='#f4f8fb' dark='#22588c' /> },
  { label: 'Boleto', w: 62, icon: <BoletoIcon /> },
  { label: 'E-mail', w: 47, icon: <MailIcon /> },
  { label: 'Ir', w: 40, icon: <DownTriangleIcon /> }
]

const LEGEND = [
  { label: 'Aguardando Retorno', bg: '#ffffff' },
  { label: 'Erro', bg: '#ffc0c0' },
  { label: 'OK para Impressão', bg: '#80ff80' },
  { label: 'Já Impresso', bg: '#c0c0ff' },
  { label: 'Retorno Pendente', bg: '#c0c0c0' },
  { label: 'Cancelamento Autorizado' },
  { label: 'Cancelado' }
]

const PartyRow = ({ label, extra, mb }) => (
  <FilterRow $mb={mb}>
    <FieldLabel>{label}</FieldLabel>
    <Field $w={67} $ml={5} $dark>0</Field>
    <ArrowButton $ml={3}><ArrowFace><ArrowRight size={14} strokeWidth={3.5} /></ArrowFace></ArrowButton>
    <Field $w={255} $ml={3} $left />
    {extra}
  </FilterRow>
)

const FilterGroup = () => (
  <GroupBox $w={514} $h={128}>
    <FilterRows>
      <FilterRow $mb={3}>
        <FieldLabel>Filial/Emit:</FieldLabel>
        <Field $w={35} $ml={5} $dark>2</Field>
        <ArrowButton $ml={2}><ArrowFace><ArrowRight size={14} strokeWidth={3.5} /></ArrowFace></ArrowButton>
        <ReadOnlyField $w={245} $ml={4}>COMPUMATE SOFTWARE TRANSPORTE</ReadOnlyField>
        <Check $ml={7}>
          <Svg w={11} h={11} box='0 0 11 11'><path d='M1.500 5.500l3 3 5-7' fill='none' stroke='#333' strokeWidth='1.200' /></Svg>
        </Check>
        <CheckLabel>Atualizar Automático</CheckLabel>
      </FilterRow>
      <PartyRow
        label='Remetente:'
        extra={<><FieldLabel $w={31} $ml={2}>Placa:</FieldLabel><Field $w={53} $ml={2} $dark /></>}
      />
      <PartyRow
        label='Destinatário:'
        extra={<><FieldLabel $w={32} $ml={2}>CT-e :</FieldLabel><Field $w={53} $ml={2} $dark /></>}
      />
      <PartyRow
        label='Tomador:'
        extra={<Combo>CT-e<ChevronDown size={12} color='#666' /></Combo>}
      />
      <FilterRow $h={23}>
        <FieldLabel>Data Inicial:</FieldLabel>
        <Field $w={66} $ml={5} $dark>01/01/2021</Field>
        <FieldLabel $w={52} $ml={3}>Data Final:</FieldLabel>
        <Field $w={66} $ml={5} $dark>06/07/2021</Field>
        <FiltrosCheck>
          <Check $bare />
          <CheckLabel>Filtros Adicionais</CheckLabel>
        </FiltrosCheck>
        <RefreshButton>Atualizar</RefreshButton>
      </FilterRow>
    </FilterRows>
  </GroupBox>
)

const StatusGroup = () => (
  <GroupBox $w={154} $h={128}>
    <GroupTitle>Status</GroupTitle>
    <StatusRows>
      <StatusRow>
        <Check />
        <StatusTag $w={53} $bg='#ffff80'>Gerado</StatusTag>
        <Check $ml={4} />
        <StatusTag $bg='#ffffff'>Inutilizado</StatusTag>
      </StatusRow>
      {LEGEND.map(({ label, bg }) => (
        <StatusRow key={label}>
          <Check $bare={!bg} />
          <StatusTag $bg={bg}>{label}</StatusTag>
        </StatusRow>
      ))}
    </StatusRows>
  </GroupBox>
)

const PrintGroup = () => (
  <GroupBox $w={119} $h={51}>
    <GroupTitle>Impressão</GroupTitle>
    <PrintRows>
      <PrintRow>
        <ViasField $w={25}>1</ViasField>
        <CheckLabel $ml={4}>vias</CheckLabel>
      </PrintRow>
      <PrintRow>
        <Check />
        <CheckLabel>Imprimir Automático</CheckLabel>
      </PrintRow>
    </PrintRows>
  </GroupBox>
)

const DataGrid = () => (
  <GridArea>
    <GridColumn>
      <HeaderRow>
        <HeaderCorner />
        {COLUMNS.map(col => (
          <HeaderCell key={col.key} $right={col.right} $spacing={col.headSpacing}>{col.title}</HeaderCell>
        ))}
      </HeaderRow>
      {ROWS.map((row, index) => (
        <DataRow key={row.numero} $kind={row.kind}>
          <RowIndicator $selected={index === 0}><RowCheck /></RowIndicator>
          {COLUMNS.map(col => (
            <DataCell
              key={col.key}
              $kind={row.kind}
              $right={col.right}
              $spacing={col.spacing}
              $words={col.words}
              $selected={index === 0 && col.key !== 'filial'}
            >
              {row[col.key]}
            </DataCell>
          ))}
        </DataRow>
      ))}
    </GridColumn>
    <VScroll>
      <VArrow><ChevronUp size={12} strokeWidth={3} /></VArrow>
      <VThumb />
      <VTrack />
      <VArrow><ChevronDown size={12} strokeWidth={3} /></VArrow>
    </VScroll>
  </GridArea>
)

const App = () => (
  <Page>
    <GlobalStyle />
    <TitleBar>
      <BrandChevrons color='#1f5c8a' size={16} />
      <TitleText>GERAL / 0001 - 771 - COMPUMATE SOFTWARES CORPORATIVOS</TitleText>
      <WindowControls>
        <WindowControl>
          <Svg w={12} h={12} box='0 0 12 12'><path d='M1 6h10' stroke='#222' /></Svg>
        </WindowControl>
        <WindowControl>
          <Svg w={12} h={12} box='0 0 12 12'><path d='M1.500 3.500h7v7h-7zM3.500 3.500v-2h7v7h-2' fill='none' stroke='#222' /></Svg>
        </WindowControl>
        <WindowControl>
          <Svg w={12} h={12} box='0 0 12 12'><path d='M1 1l10 10M11 1L1 11' stroke='#222' /></Svg>
        </WindowControl>
      </WindowControls>
    </TitleBar>

    <MenuBar>
      {['Arquivo', 'Editar', 'Navegação', 'Opções', 'Ferramentas', 'Janela', 'Email', 'Ajuda'].map(item => (
        <MenuItem key={item}>{item}</MenuItem>
      ))}
    </MenuBar>

    <MainToolbar>
      <MenuLogo><BrandChevrons color='#ffffff' size={15} />menu</MenuLogo>
      <ToolIcon><NewDocIcon /></ToolIcon>
      <ToolIcon><FloppyIcon /></ToolIcon>
      <ToolIcon $w={30}><EditDocIcon /></ToolIcon>
      <ToolIcon $w={33}><GrayXIcon /></ToolIcon>
      <ToolIcon $w={30}><UndoIcon /></ToolIcon>
      <ToolSep />
      <ToolIcon><PrintWindowIcon /></ToolIcon>
      <ToolIcon><PrinterIcon /></ToolIcon>
      <ToolIcon><PageZoomIcon /></ToolIcon>
      <ToolSep />
      <ToolIcon><NavIcon dir='left' bar /></ToolIcon>
      <ToolIcon $w={30}><NavIcon dir='left' /></ToolIcon>
      <ToolIcon $w={30}><NavIcon dir='right' /></ToolIcon>
      <ToolIcon $w={30}><NavIcon dir='right' bar /></ToolIcon>
      <ToolSep />
      <ToolIcon $w={28}><FactoryIcon /></ToolIcon>
      <ToolIcon $w={16}><Caret /></ToolIcon>
      <ToolIcon $w={32}><UsersIcon /></ToolIcon>
      <ToolIcon $w={12}><Caret /></ToolIcon>
      <ToolIcon $w={34}><LockIcon /></ToolIcon>
      <ToolSep />
      <ToolIcon $w={28}><NoteHandIcon /></ToolIcon>
      <ToolIcon $w={30}><FlagIcon /></ToolIcon>
      <ToolIcon $w={34}><HeadsetIcon /></ToolIcon>
      <ToolSep />
      <ToolIcon $w={28}><DoorIcon /></ToolIcon>
      <RightTools>
        <BellBox><BellIcon /></BellBox>
        <MenuSearch>
          <SearchHint>Pesquisar no Menu</SearchHint>
          <SearchGlyph $color='#777'><Search size={15} /></SearchGlyph>
          <SearchGlyph $ml={4} $color='#a9cbe6'><X size={11} strokeWidth={4} /></SearchGlyph>
        </MenuSearch>
      </RightTools>
    </MainToolbar>

    <Body>
      <ChildWindow>
        <ChildTitle>
          <BrandChevrons color='#1f6a96' size={18} />
          <ChildTitleText>Manutenção CT-e</ChildTitleText>
          <ChildControls>
            <ChildControl><MinGlyph /></ChildControl>
            <ChildControl><MaxGlyph /></ChildControl>
            <ChildControl $close><X size={13} strokeWidth={3.5} /></ChildControl>
          </ChildControls>
        </ChildTitle>

        <FormArea>
          <FilterGroup />
          <StatusGroup />
          <PrintGroup />
        </FormArea>

        <ActionBar>
          {ACTIONS.map(action => (
            <ActionButton key={action.label} $w={action.w} $disabled={action.disabled}>
              <ActionIcon>{action.icon}</ActionIcon>
              {action.label}
            </ActionButton>
          ))}
          <ActionText $w={54}>Carta de<br />Correção</ActionText>
          <ActionText $w={72}>Comprovante<br />Entrega</ActionText>
        </ActionBar>

        <DataGrid />

        <HScroll>
          <HArrow><ChevronLeft size={13} strokeWidth={3} /></HArrow>
          <HThumb />
          <HArrow $w={17} $ml={211}><ChevronRight size={13} strokeWidth={3} /></HArrow>
        </HScroll>

        <InfoRow>
          <InfoLabel>Outros Dados:</InfoLabel>
          <CertBadge>Certificado válido até 09/10/2021 15:43:15</CertBadge>
        </InfoRow>

        <MemoRow>
          <Memo>
            <MemoText>{'100 - Autorizado o uso do CT-e\n02/07/2021 14:47:12    103 - Lote recebido com sucesso'}</MemoText>
            <MemoScroll>
              <ChevronUp size={12} strokeWidth={3} />
              <ChevronDown size={12} strokeWidth={3} />
            </MemoScroll>
          </Memo>
          <SearchButton><BinocularsIcon /></SearchButton>
        </MemoRow>
      </ChildWindow>

      <SidePanel>
        <SideItem><WindowsIcon />CT-E</SideItem>
        <SideItem><WindowsIcon />CT-e Impressão</SideItem>
      </SidePanel>
    </Body>
  </Page>
)

export default App
